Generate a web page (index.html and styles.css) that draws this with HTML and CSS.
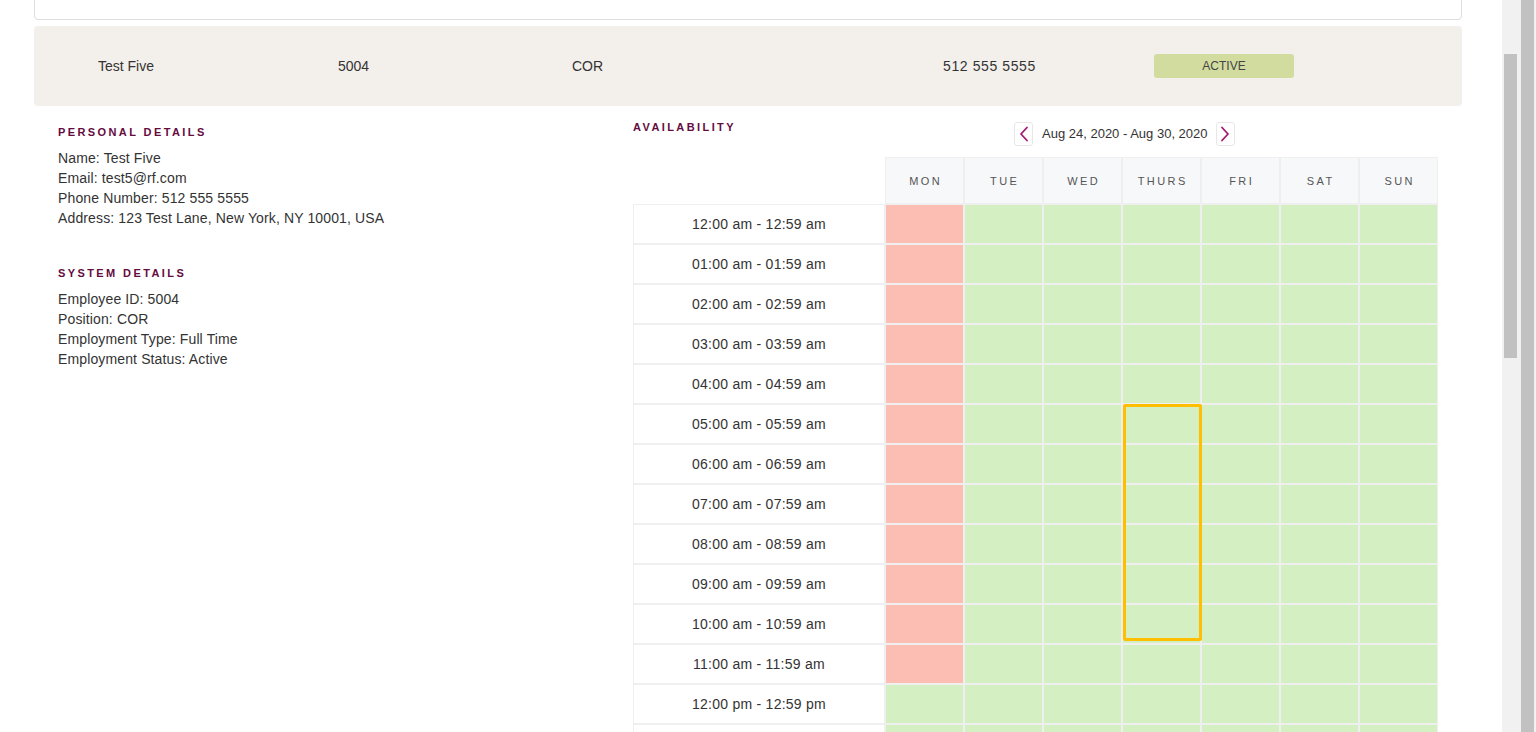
FILE: index.html
```html
<!DOCTYPE html>
<html lang="en">
<head>
<meta charset="utf-8">
<title>Employee – Test Five</title>
<link rel="stylesheet" href="styles.css">
</head>
<body>
<div class="page">
  <div class="main">
    <div class="content">
      <div class="top-card"></div>

      <div class="summary">
        <span class="s-name">Test Five</span>
        <span class="s-id">5004</span>
        <span class="s-pos">COR</span>
        <span class="s-phone">512 555 5555</span>
        <span class="badge">ACTIVE</span>
      </div>

      <div class="details">
        <div class="left">
          <h3 class="sec-title">PERSONAL DETAILS</h3>
          <div class="lines">
            <div>Name: Test Five</div>
            <div>Email: test5@rf.com</div>
            <div>Phone Number: 512 555 5555</div>
            <div>Address: 123 Test Lane, New York, NY 10001, USA</div>
          </div>
          <h3 class="sec-title sys">SYSTEM DETAILS</h3>
          <div class="lines">
            <div>Employee ID: 5004</div>
            <div>Position: COR</div>
            <div>Employment Type: Full Time</div>
            <div>Employment Status: Active</div>
          </div>
        </div>

        <div class="right">
          <div class="avail-head">
            <h3 class="sec-title avail-title">AVAILABILITY</h3>
            <div class="week-nav">
              <button class="nav-btn" aria-label="Previous week">
                <svg width="10" height="16" viewBox="0 0 10 16"><polyline points="8,1.5 2,8 8,14.5" fill="none" stroke="#a3186f" stroke-width="1.8" stroke-linecap="round" stroke-linejoin="round"/></svg>
              </button>
              <span class="week-label">Aug 24, 2020 - Aug 30, 2020</span>
              <button class="nav-btn" aria-label="Next week">
                <svg width="10" height="16" viewBox="0 0 10 16"><polyline points="2,1.5 8,8 2,14.5" fill="none" stroke="#a3186f" stroke-width="1.8" stroke-linecap="round" stroke-linejoin="round"/></svg>
              </button>
            </div>
          </div>

          <div class="grid">
            <div class="corner"></div>
            <div class="day">MON</div>
            <div class="day">TUE</div>
            <div class="day">WED</div>
            <div class="day">THURS</div>
            <div class="day">FRI</div>
            <div class="day">SAT</div>
            <div class="day">SUN</div>

            <div class="time">12:00 am - 12:59 am</div>
            <div class="cell busy"></div><div class="cell free"></div><div class="cell free"></div><div class="cell free"></div><div class="cell free"></div><div class="cell free"></div><div class="cell free"></div>
            <div class="time">01:00 am - 01:59 am</div>
            <div class="cell busy"></div><div class="cell free"></div><div class="cell free"></div><div class="cell free"></div><div class="cell free"></div><div class="cell free"></div><div class="cell free"></div>
            <div class="time">02:00 am - 02:59 am</div>
            <div class="cell busy"></div><div class="cell free"></div><div class="cell free"></div><div class="cell free"></div><div class="cell free"></div><div class="cell free"></div><div class="cell free"></div>
            <div class="time">03:00 am - 03:59 am</div>
            <div class="cell busy"></div><div class="cell free"></div><div class="cell free"></div><div class="cell free"></div><div class="cell free"></div><div class="cell free"></div><div class="cell free"></div>
            <div class="time">04:00 am - 04:59 am</div>
            <div class="cell busy"></div><div class="cell free"></div><div class="cell free"></div><div class="cell free"></div><div class="cell free"></div><div class="cell free"></div><div class="cell free"></div>
            <div class="time">05:00 am - 05:59 am</div>
            <div class="cell busy"></div><div class="cell free"></div><div class="cell free"></div><div class="cell free"></div><div class="cell free"></div><div class="cell free"></div><div class="cell free"></div>
            <div class="time">06:00 am - 06:59 am</div>
            <div class="cell busy"></div><div class="cell free"></div><div class="cell free"></div><div class="cell free"></div><div class="cell free"></div><div class="cell free"></div><div class="cell free"></div>
            <div class="time">07:00 am - 07:59 am</div>
            <div class="cell busy"></div><div class="cell free"></div><div class="cell free"></div><div class="cell free"></div><div class="cell free"></div><div class="cell free"></div><div class="cell free"></div>
            <div class="time">08:00 am - 08:59 am</div>
            <div class="cell busy"></div><div class="cell free"></div><div class="cell free"></div><div class="cell free"></div><div class="cell free"></div><div class="cell free"></div><div class="cell free"></div>
            <div class="time">09:00 am - 09:59 am</div>
            <div class="cell busy"></div><div class="cell free"></div><div class="cell free"></div><div class="cell free"></div><div class="cell free"></div><div class="cell free"></div><div class="cell free"></div>
            <div class="time">10:00 am - 10:59 am</div>
            <div class="cell busy"></div><div class="cell free"></div><div class="cell free"></div><div class="cell free"></div><div class="cell free"></div><div class="cell free"></div><div class="cell free"></div>
            <div class="time">11:00 am - 11:59 am</div>
            <div class="cell busy"></div><div class="cell free"></div><div class="cell free"></div><div class="cell free"></div><div class="cell free"></div><div class="cell free"></div><div class="cell free"></div>
            <div class="time">12:00 pm - 12:59 pm</div>
            <div class="cell free"></div><div class="cell free"></div><div class="cell free"></div><div class="cell free"></div><div class="cell free"></div><div class="cell free"></div><div class="cell free"></div>
            <div class="time">01:00 pm - 01:59 pm</div>
            <div class="cell free"></div><div class="cell free"></div><div class="cell free"></div><div class="cell free"></div><div class="cell free"></div><div class="cell free"></div><div class="cell free"></div>
            <div class="time">02:00 pm - 02:59 pm</div>
            <div class="cell free"></div><div class="cell free"></div><div class="cell free"></div><div class="cell free"></div><div class="cell free"></div><div class="cell free"></div><div class="cell free"></div>
            <div class="time">03:00 pm - 03:59 pm</div>
            <div class="cell free"></div><div class="cell free"></div><div class="cell free"></div><div class="cell free"></div><div class="cell free"></div><div class="cell free"></div><div class="cell free"></div>

            <div class="selection"></div>
          </div>
        </div>
      </div>
    </div>
  </div>
  <div class="inner-scroll"><div class="inner-thumb"></div></div>
  <div class="outer-scroll"><div class="outer-thumb"></div></div>
</div>
</body>
</html>
```

FILE: styles.css
```css
* { box-sizing: border-box; }

html, body {
  margin: 0;
  padding: 0;
  background: #ffffff;
  font-family: "Liberation Sans", Arial, sans-serif;
  color: #333333;
}

.page {
  display: flex;
  width: 1536px;
  height: 732px;
  overflow: hidden;
}

.main {
  width: 1502px;
  flex: 0 0 1502px;
  overflow: hidden;
}

.content {
  margin-left: 34px;
  width: 1428px;
}

.top-card {
  height: 40px;
  margin-top: -20px;
  border: 1px solid #dedede;
  border-radius: 4px;
  background: #fff;
}

.summary {
  margin-top: 6px;
  height: 80px;
  background: #f3efeb;
  border-radius: 4px;
  display: grid;
  grid-template-columns: 240px 234px 371px 211px 140px;
  align-items: center;
  padding-left: 64px;
  font-size: 14px;
  color: #333;
}

.s-phone {
  letter-spacing: 0.6px;
}

.badge {
  display: block;
  height: 24px;
  line-height: 24px;
  text-align: center;
  background: #d3dc9f;
  border-radius: 3px;
  font-size: 12px;
  color: #444;
}

.details {
  display: flex;
  padding-left: 24px;
}

.left {
  width: 575px;
  flex: 0 0 575px;
  padding-top: 19px;
}

.right {
  width: 805px;
  flex: 0 0 805px;
  padding-top: 14px;
}

.sec-title {
  margin: 0;
  font-size: 11px;
  line-height: 14px;
  font-weight: bold;
  letter-spacing: 2.4px;
  color: #650b3e;
}

.sec-title.sys {
  margin-top: 38px;
}

.lines {
  margin-top: 9px;
  font-size: 14px;
  line-height: 20px;
  letter-spacing: 0.13px;
  color: #333;
}

.avail-head {
  display: flex;
  align-items: flex-start;
  height: 26px;
}

.avail-title {
  flex: 0 0 381px;
}

.week-nav {
  display: flex;
  align-items: center;
  margin-top: 2px;
}

.nav-btn {
  width: 19px;
  height: 24px;
  padding: 0;
  border: 1px solid #e7e7e7;
  border-radius: 3px;
  background: #fff;
  display: flex;
  align-items: center;
  justify-content: center;
}

.week-label {
  margin: 0 8px 0 9px;
  font-size: 13px;
  color: #333;
  line-height: 24px;
}

.grid {
  position: relative;
  margin-top: 11px;
  display: grid;
  grid-template-columns: 252px repeat(7, 79px);
  grid-template-rows: 47px;
  grid-auto-rows: 40px;
}

.corner {
  background: #fff;
}

.day {
  border: 1px solid #efefef;
  background: #f7f8fa;
  display: flex;
  align-items: center;
  justify-content: center;
  font-size: 11px;
  letter-spacing: 2.4px;
  padding-left: 2.4px;
  color: #555;
}

.time {
  border: 1px solid #efefef;
  background: #fff;
  display: flex;
  align-items: center;
  justify-content: center;
  font-size: 14px;
  letter-spacing: 0.25px;
  color: #333;
}

.cell {
  border: 1px solid #efefef;
}

.cell.busy { background: #fcbdb3; }
.cell.free { background: #d4f0c2; }

/* selection outline drawn over the THURS 05:00–10:59 cells */
.selection {
  position: absolute;
  grid-column: 5 / 6;
  grid-row: 7 / 13;
  top: 0;
  bottom: 3px;
  left: 1px;
  right: -1px;
  border: 3px solid #ffbe00;
  border-radius: 2px;
  pointer-events: none;
}

.inner-scroll {
  flex: 0 0 19px;
  background: #f1f1f1;
  padding-top: 54px;
  padding-left: 2px;
}

.inner-thumb {
  width: 13px;
  height: 304px;
  background: #c1c1c1;
}

.outer-scroll {
  flex: 0 0 15px;
  background: #f1f1f1;
}

.outer-thumb {
  width: 13px;
  height: 100%;
  background: #c1c1c1;
}
```
